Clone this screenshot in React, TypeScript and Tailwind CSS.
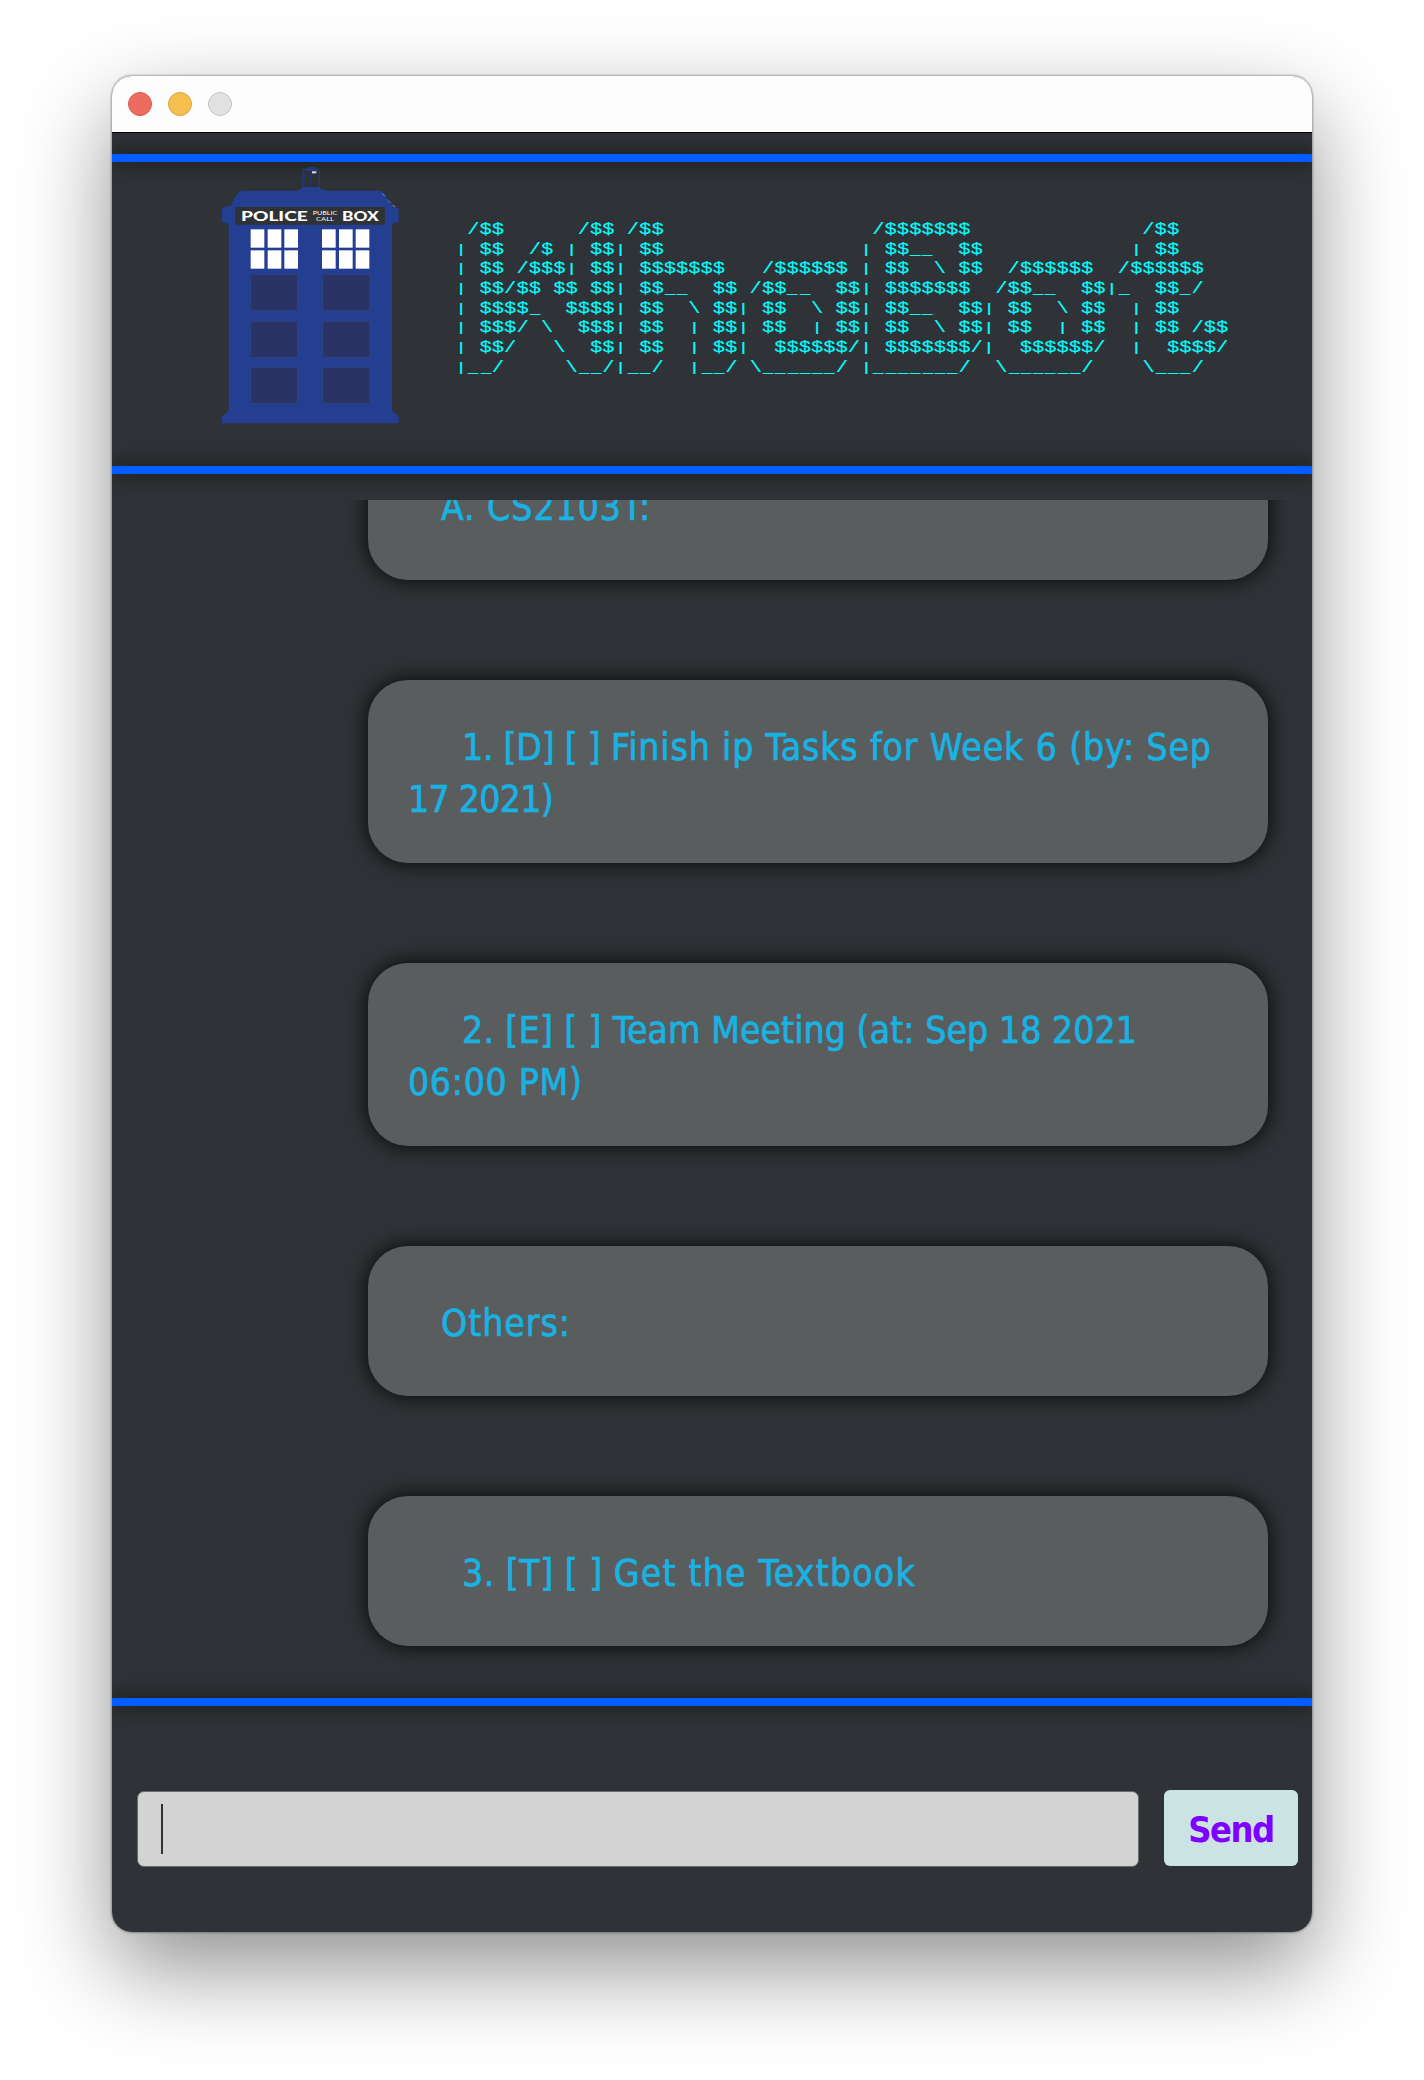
import React from "react";

const BANNER = [
  " /$$      /$$ /$$                 /$$$$$$$              /$$",
  "| $$  /$ | $$| $$                | $$__  $$            | $$",
  "| $$ /$$$| $$| $$$$$$$   /$$$$$$ | $$  \\ $$  /$$$$$$  /$$$$$$",
  "| $$/$$ $$ $$| $$__  $$ /$$__  $$| $$$$$$$  /$$__  $$|_  $$_/",
  "| $$$$_  $$$$| $$  \\ $$| $$  \\ $$| $$__  $$| $$  \\ $$  | $$",
  "| $$$/ \\  $$$| $$  | $$| $$  | $$| $$  \\ $$| $$  | $$  | $$ /$$",
  "| $$/   \\  $$| $$  | $$|  $$$$$$/| $$$$$$$/|  $$$$$$/  |  $$$$/",
  "|__/     \\__/|__/  |__/ \\______/ |_______/  \\______/    \\___/",
];

function Banner() {
  return (
    <pre className="ml-[55px] mt-[54.5px] h-[157px] origin-top-left scale-y-[0.82] text-[20.47px] leading-[24px] text-[#00ffff] font-['Liberation_Mono',monospace] [-webkit-text-stroke:0.2px_#00ffff]">
      {BANNER.map((row, r) => (
        <React.Fragment key={r}>
          {row.split(/([|_])/).map((part, i) => {
            if (part === "|") {
              return (
                <span key={i} className="inline-block origin-[50%_50%] scale-y-[0.76]">
                  |
                </span>
              );
            }
            if (part === "_") {
              return (
                <span key={i} className="inline-block origin-center scale-x-[0.84]">
                  _
                </span>
              );
            }
            return part;
          })}
          {"\n"}
        </React.Fragment>
      ))}
    </pre>
  );
}

function PoliceBox() {
  const panes = [452, 503, 553, 666, 717, 767];
  return (
    <svg className="block h-[260px] w-[180px] shrink-0" viewBox="360 315 540 780">
      <path
        fill="#243e92"
        d="M425 392 H590 Q606 388 608 381 H660 Q662 388 678 392 H838 Q852 396 858 408 Q866 426 882 438 L896 446 V480 Q896 489 876 491 V1050 Q878 1058 896 1068 V1090 H366 V1068 Q384 1058 386 1050 V491 Q366 489 365 480 V446 Q378 439 392 437 Q400 428 402 415 Q414 396 425 392Z"
      />
      <path d="M609 382 V330 Q633 314 658 330 V382" fill="none" stroke="#243b86" strokeWidth="3" />
      <path d="M612 332 Q633 318 655 332Z" fill="#243e92" />
      <path d="M631 336 V380 M615 336 V378" stroke="#25356e" strokeWidth="4" />
      <rect x="636" y="334" width="13" height="6" fill="#d9dff0" />
      <path d="M846 400 l8 8 M865 422 l6 6 M878 436 l8 4" stroke="#8a8d96" strokeWidth="3" />
      <rect x="405" y="441" width="450" height="53" fill="#2f3236" />
      <g fill="#ffffff" fontFamily="Lato, 'Liberation Sans', sans-serif">
        <text x="423" y="482" fontSize="41" fontWeight="900" textLength="200" lengthAdjust="spacingAndGlyphs">POLICE</text>
        <text x="726" y="482" fontSize="41" fontWeight="900" textLength="110" lengthAdjust="spacingAndGlyphs">BOX</text>
        <text x="638" y="464" fontSize="16" textLength="74" lengthAdjust="spacingAndGlyphs">PUBLIC</text>
        <text x="648" y="483" fontSize="16" textLength="54" lengthAdjust="spacingAndGlyphs">CALL</text>
      </g>
      {panes.map((x) => (
        <g key={x} fill="#ffffff">
          <rect x={x} y="508" width="41" height="55" />
          <rect x={x} y="571" width="41" height="55" />
        </g>
      ))}
      {[643, 784, 922].map((y) => (
        <g key={y} fill="#2a3366" stroke="#2e4382" strokeWidth="3">
          <rect x="451" y={y} width="142" height="109" />
          <rect x="668" y={y} width="142" height="109" />
        </g>
      ))}
    </svg>
  );
}

function Rule() {
  return <div className="relative h-2 shrink-0 bg-[#005dff] shadow-[0_0_20px_0_rgba(0,0,0,0.75)]" />;
}

function Bubble({ children, tall = false }: { children: React.ReactNode; tall?: boolean }) {
  return (
    <div
      className={
        "ml-auto mr-11 flex w-[900px] shrink-0 flex-col rounded-[40px] bg-[#5a5d5e] px-10 shadow-[0_0_20px_1px_rgba(0,0,0,0.85)] " +
        (tall ? "h-[183px] pt-[42px]" : "h-[150px] pt-[52px]")
      }
    >
      {children}
    </div>
  );
}

const line =
  "block h-[52px] whitespace-pre text-[37px] leading-[52px] text-[#19b2e2] [-webkit-text-stroke:0.7px_#19b2e2] ";

export default function App() {
  return (
    <div className="h-[2080px] w-[1424px] overflow-hidden bg-white px-28 pt-[76px]">
      <div className="rounded-[20px] shadow-[0_0_2px_1px_rgba(0,0,0,0.3),0_36px_90px_rgba(0,0,0,0.44)]">
        <div className="flex h-[1856px] w-[1200px] flex-col overflow-hidden rounded-[20px] bg-[#2f3236] font-['DejaVu_Sans','Comic_Sans_MS',cursive] [font-stretch:condensed]">
          <div className="flex h-14 shrink-0 items-center gap-4 bg-[#fdfdfd] pl-4">
            <span className="size-6 rounded-full border border-[#d8554b] bg-[#ed6b5f]" />
            <span className="size-6 rounded-full border border-[#dba23c] bg-[#f5bf4f]" />
            <span className="size-6 rounded-full border border-[#c4c4c4] bg-[#e2e2e2]" />
          </div>
          <div className="h-[22px] shrink-0 border-t border-black" />
          <Rule />
          <header className="relative flex h-[304px] shrink-0 pl-[108px] pt-[3px]">
            <PoliceBox />
            <Banner />
          </header>
          <Rule />
          <main className="mt-[26px] h-[1198px] shrink-0 overflow-hidden">
            <div className="-mt-[70px] flex flex-col gap-[100px]">
              <Bubble>
                <span className={line + "pl-[33px] tracking-[0.95px]"}>A. CS2103T:</span>
              </Bubble>
              <Bubble tall>
                <span className={line + "pl-[54px] tracking-[0.87px]"}>
                  <span className="tracking-[-0.25px]">1. [D] [ ] </span>
                  Finish ip Tasks for Week 6 (by: Sep
                </span>
                <span className={line + "tracking-[-0.7px]"}>17 2021)</span>
              </Bubble>
              <Bubble tall>
                <span className={line + "pl-[54px] tracking-[0.08px]"}>
                  <span className="tracking-[0.35px]">2. [E] [ ] </span>
                  Team Meeting (at: Sep 18 2021
                </span>
                <span className={line + "tracking-[0.7px]"}>06:00 PM)</span>
              </Bubble>
              <Bubble>
                <span className={line + "pl-[33px] tracking-[1px]"}>Others:</span>
              </Bubble>
              <Bubble>
                <span className={line + "pl-[54px] tracking-[1.2px]"}>
                  <span className="tracking-[0.5px]">3. [T] [ ] </span>
                  Get the Textbook
                </span>
              </Bubble>
            </div>
          </main>
          <Rule />
          <footer className="flex items-start pl-[25px] pt-[84px]">
            <div className="mt-px flex h-[76px] w-[1002px] items-center rounded-[7px] border border-[#68696b] bg-[#d3d3d3] pl-[23px]">
              <span className="h-[50px] w-0.5 bg-[#2f3236]" />
            </div>
            <button className="ml-[25px] h-[76px] w-[134px] rounded-md bg-[#cbe3e3] pt-1 text-[36px] font-bold tracking-[-1.5px] text-[#8000ff]">
              Send
            </button>
          </footer>
        </div>
      </div>
    </div>
  );
}
